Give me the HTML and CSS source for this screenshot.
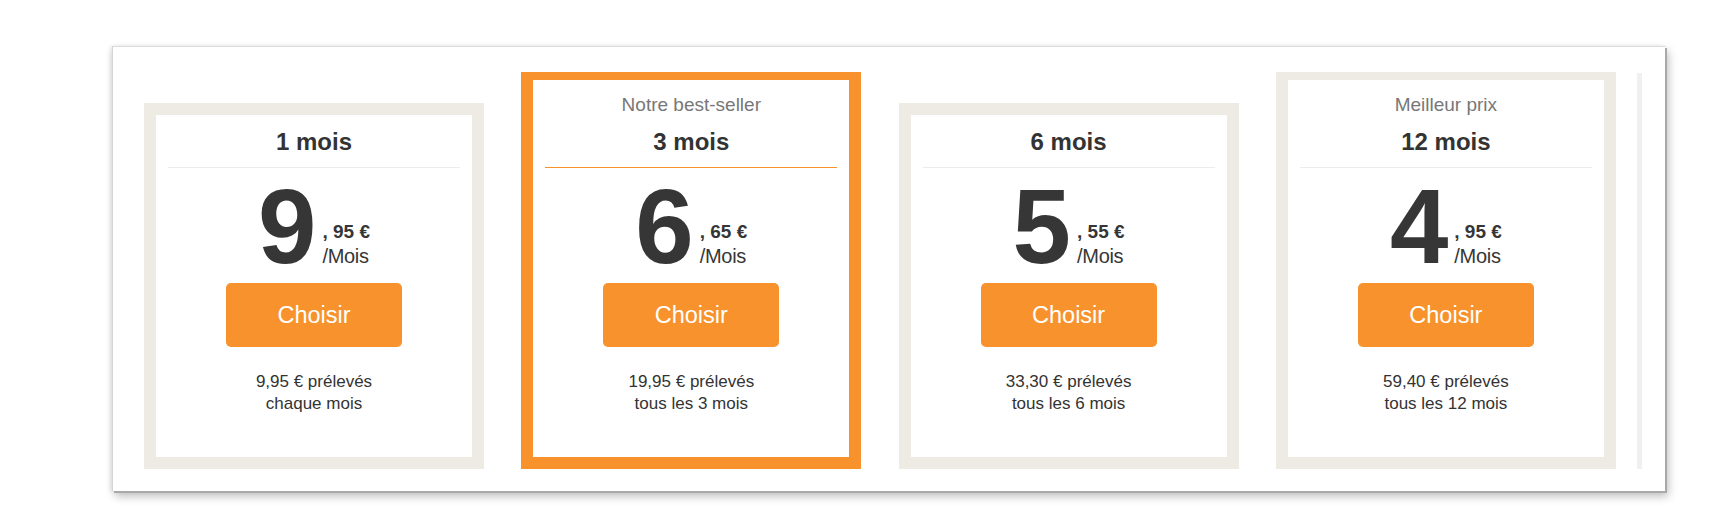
FILE: index.html
```html
<!DOCTYPE html>
<html lang="fr">
<head>
<meta charset="utf-8">
<title>Offres</title>
<link rel="stylesheet" href="styles.css">
</head>
<body>
<div class="frame">
  <div class="plans">
    <div class="card">
      <div class="title">1 mois</div>
      <div class="divider"></div>
      <div class="price"><span class="int">9</span><span class="side"><span class="cents">, 95 €</span><span class="per">/Mois</span></span></div>
      <a class="btn">Choisir</a>
      <p class="note">9,95 € prélevés<br>chaque mois</p>
    </div>
    <div class="card card-featured">
      <div class="label">Notre best-seller</div>
      <div class="title">3 mois</div>
      <div class="divider"></div>
      <div class="price"><span class="int">6</span><span class="side"><span class="cents">, 65 €</span><span class="per">/Mois</span></span></div>
      <a class="btn">Choisir</a>
      <p class="note">19,95 € prélevés<br>tous les 3 mois</p>
    </div>
    <div class="card">
      <div class="title">6 mois</div>
      <div class="divider"></div>
      <div class="price"><span class="int">5</span><span class="side"><span class="cents">, 55 €</span><span class="per">/Mois</span></span></div>
      <a class="btn">Choisir</a>
      <p class="note">33,30 € prélevés<br>tous les 6 mois</p>
    </div>
    <div class="card card-labeled">
      <div class="label">Meilleur prix</div>
      <div class="title">12 mois</div>
      <div class="divider"></div>
      <div class="price"><span class="int">4</span><span class="side"><span class="cents">, 95 €</span><span class="per">/Mois</span></span></div>
      <a class="btn">Choisir</a>
      <p class="note">59,40 € prélevés<br>tous les 12 mois</p>
    </div>
    <div class="peek"></div>
  </div>
</div>
</body>
</html>
```

FILE: styles.css
```css
* { box-sizing: border-box; }

html, body {
  margin: 0;
  padding: 0;
  background: #ffffff;
}

body {
  font-family: "Liberation Sans", Arial, Helvetica, sans-serif;
  color: #333333;
  width: 1726px;
  height: 532px;
  overflow: hidden;
}

.frame {
  margin: 46px 0 0 112px;
  width: 1553px;
  height: 445px;
  background: #ffffff;
  border-top: 1px solid #dcdcdc;
  border-left: 1px solid #d4d4d4;
  box-shadow: 2px 2px 0 #a9a9a9, 3px 5px 9px rgba(0, 0, 0, 0.28), -2px 0 4px rgba(0, 0, 0, 0.08);
}

.plans {
  display: flex;
  align-items: flex-end;
  height: 100%;
  padding: 0 0 22px 31px;
  gap: 37.3px;
}

.card {
  width: 340px;
  flex: none;
  background: #ffffff;
  border: 12px solid #eeebe4;
  padding: 12.7px 0 41.5px;
  display: flex;
  flex-direction: column;
  align-items: center;
}

.card-labeled,
.card-featured {
  border-top-width: 8.5px;
}

.card-featured {
  border-color: #f7922c;
}

.label {
  font-size: 19px;
  line-height: 23.5px;
  color: #777777;
  margin-bottom: 11px;
}

.title {
  font-size: 24px;
  line-height: 30px;
  font-weight: bold;
  color: #333333;
}

.divider {
  align-self: stretch;
  margin: 9.7px 12px 0;
  height: 1px;
  background: #ececec;
}

.card-featured .divider {
  background: #f7922c;
}

.price {
  display: flex;
  align-items: flex-end;
  justify-content: center;
  margin-top: 12.5px;
  height: 92px;
  color: #363636;
}

.int {
  display: block;
  font-size: 105px;
  line-height: 92px;
  font-weight: bold;
}

.side {
  display: flex;
  flex-direction: column;
  margin-left: 6px;
  padding-bottom: 4.6px;
}

.cents {
  font-size: 19px;
  line-height: 24px;
  font-weight: bold;
}

.per {
  font-size: 20px;
  line-height: 24px;
  letter-spacing: -0.3px;
}

.btn {
  display: block;
  margin-top: 10.5px;
  width: 176px;
  height: 64px;
  border-radius: 5px;
  background: #f7922c;
  color: #ffffff;
  font-size: 23.5px;
  line-height: 64px;
  text-align: center;
  text-decoration: none;
}

.note {
  margin: 23.4px 0 0;
  font-size: 17px;
  line-height: 22.5px;
  text-align: center;
  color: #333333;
}

.peek {
  flex: none;
  width: 5px;
  height: 396px;
  margin-left: -16.5px;
  background: #f0f0f0;
}
```
